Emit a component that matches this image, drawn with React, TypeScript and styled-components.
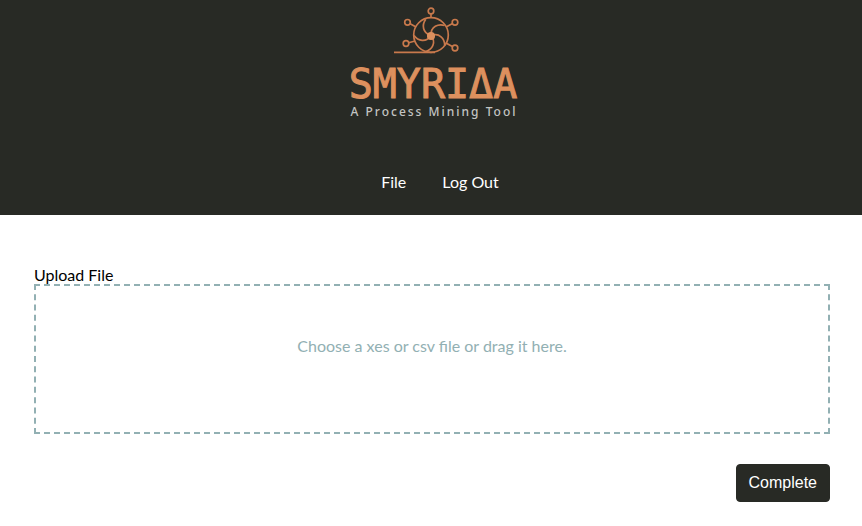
import React from "react";
import styled, { createGlobalStyle } from "styled-components";

const GlobalStyle = createGlobalStyle`
  * { box-sizing: border-box; }
  body {
    margin: 0;
    background: #fff;
    color: #000;
    font-family: Lato, sans-serif;
    font-size: 16px;
    line-height: 20px;
  }
`;

const Header = styled.header`
  display: flex;
  flex-direction: column;
  align-items: center;
  background: #282a25;
  padding: 6px 0 23px;
`;

const Brand = styled.div`
  display: flex;
  flex-direction: column;
  align-items: center;
  padding-left: 4px;
`;

const Emblem = styled.svg`
  display: block;
  width: 84px;
  height: 50px;
  fill: none;
  stroke: #c8794c;
  stroke-width: 1.7;
`;

const Wordmark = styled.span`
  margin-top: 8px;
  color: #dd905e;
  font: 400 40px/40px "DejaVu Sans Mono", monospace;
  -webkit-text-stroke: 1px #dd905e;
`;

const Tagline = styled.span`
  padding-left: 2px;
  color: #c3c4c2;
  font: 500 12px/16px "Noto Sans", sans-serif;
  letter-spacing: 2px;
`;

const Nav = styled.nav`
  display: flex;
  gap: 36px;
  margin-top: 52px;
  padding-left: 18px;
`;

const NavLink = styled.a`
  color: #fff;
  text-decoration: none;
`;

const Form = styled.form`
  display: flex;
  flex-direction: column;
  padding: 51px 32px 24px 34px;
`;

const FieldLabel = styled.label`
  line-height: 18px;
`;

const DropZone = styled.label`
  display: flex;
  justify-content: center;
  height: 150px;
  padding-top: 50px;
  border: 2px dashed #92b0b3;
  color: #92b0b3;
  cursor: pointer;
`;

const FileInput = styled.input`
  position: absolute;
  width: 1px;
  height: 1px;
  opacity: 0;
`;

const SubmitButton = styled.button`
  align-self: flex-end;
  margin-top: 30px;
  padding: 8px 12px;
  border: 1px solid #282a25;
  border-radius: 4px;
  background: #282a25;
  color: #fff;
  font: 16px/20px "Liberation Sans", Arial, sans-serif;
  cursor: pointer;
`;

const nodes = [
  { x: 431, y: 11, fromX: 431, fromY: 18 },
  { x: 407.5, y: 22.3, fromX: 416, fromY: 27 },
  { x: 455, y: 22.3, fromX: 446, fromY: 27 },
  { x: 406, y: 43.5, fromX: 415, fromY: 41 },
  { x: 455, y: 48, fromX: 446, fromY: 43 },
];

function Logo() {
  return (
    <Brand>
      <Emblem viewBox="391 6 84 50" aria-hidden="true">
        <circle cx="431" cy="35" r="17.3" />
        <path d="M394 52.3H435" />
        {nodes.map((n) => (
          <g key={`${n.x}-${n.y}`}>
            <path d={`M${n.fromX} ${n.fromY}L${n.x} ${n.y}`} />
            <circle cx={n.x} cy={n.y} r="2.8" fill="#282a25" />
          </g>
        ))}
        {[0, 72, 144, 216, 288].map((angle) => (
          <path key={angle} transform={`rotate(${angle} 431 35.5)`} d="M431 35.5C426 43 418 41 414 35.5" />
        ))}
        <circle cx="431" cy="36" r="3.2" fill="#dd905e" stroke="#dd905e" />
      </Emblem>
      <Wordmark>SMYRIΔA</Wordmark>
      <Tagline>A Process Mining Tool</Tagline>
    </Brand>
  );
}

export default function App() {
  return (
    <>
      <GlobalStyle />
      <Header>
        <Logo />
        <Nav>
          <NavLink href="#file">File</NavLink>
          <NavLink href="#logout">Log Out</NavLink>
        </Nav>
      </Header>
      <Form onSubmit={(event: React.FormEvent) => event.preventDefault()}>
        <FieldLabel htmlFor="upload">Upload File</FieldLabel>
        <DropZone>
          Choose a xes or csv file or drag it here.
          <FileInput id="upload" type="file" accept=".xes,.csv" />
        </DropZone>
        <SubmitButton type="submit">Complete</SubmitButton>
      </Form>
    </>
  );
}
